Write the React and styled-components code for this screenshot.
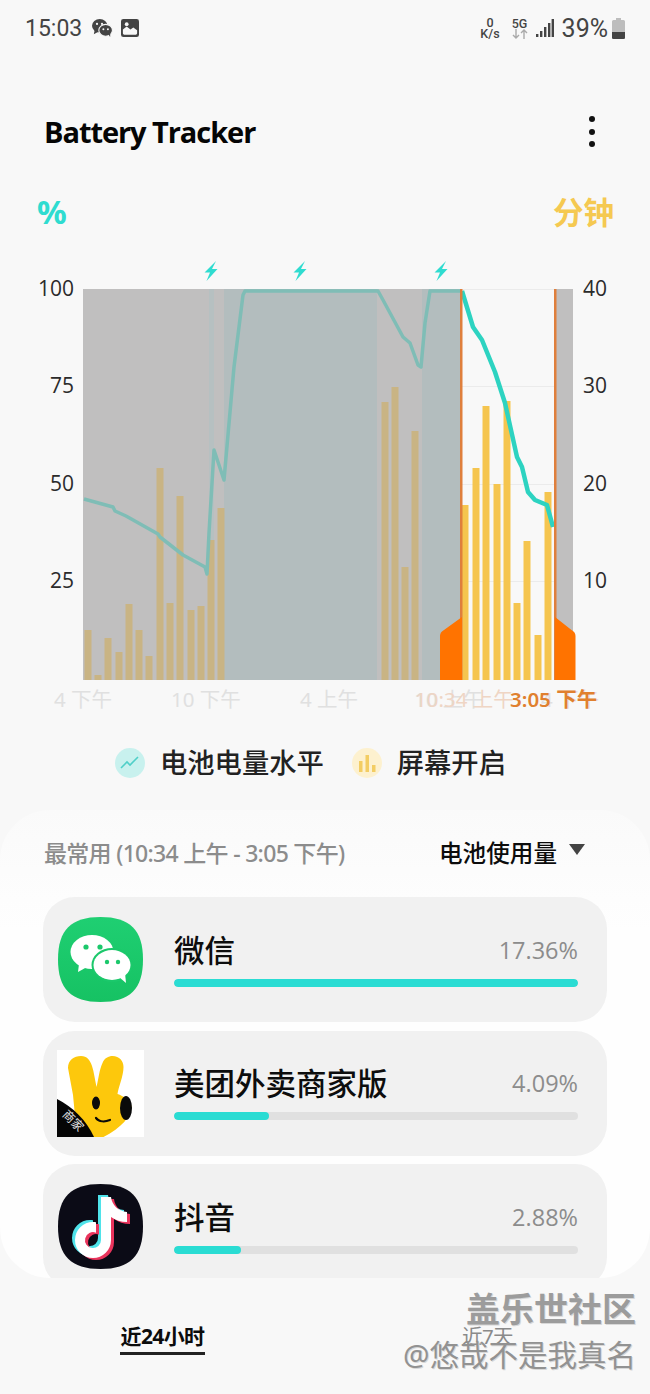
import React from "react";
import styled, { createGlobalStyle } from "styled-components";

const SANS = `"Noto Sans", "Noto Sans CJK SC", sans-serif`;

const GlobalStyle = createGlobalStyle`
  html, body {
    margin: 0;
    padding: 0;
    background: #f8f8f8;
  }
  body {
    font-family: ${SANS};
  }
`;

const dimBars = [
  [88, 630], [98, 675], [108, 638], [119, 652], [129, 604], [139, 630], [149, 656],
  [160, 468], [170, 603], [180, 496], [191, 610], [201, 606], [211, 540], [221, 508],
  [385, 402], [395, 387], [405, 567], [415, 431],
];
const liveBars = [
  [465, 505], [476, 468], [486, 406], [497, 484], [507, 401],
  [517, 603], [527, 541], [538, 635], [548, 492],
];
const dimLine =
  "84,499 113,507 115,511 126,516 158,534 160,537 183,555 205,567 207,574 209,533 214,450 224,480 234,367 243,295 245,291 378,291 383,300 403,337 410,343 418,365 421,367 425,323 430,291 462,291";
const liveLine =
  "462,291 473,327 482,340 495,372 505,403 517,457 522,467 528,492 535,500 547,505 553,527";
const bolts = [211, 300, 441];
const gridLines = [289, 386, 484, 581];

const xLabels = [
  { text: "4 下午", left: 54, tone: "faint" },
  { text: "10 下午", left: 171, tone: "faint" },
  { text: "4 上午", left: 300, tone: "faint" },
  { text: "10 上午", left: 414, tone: "faint" },
  { text: "4 下午", left: 541, tone: "faint" },
  { text: "10:34 上午", left: 415, tone: "soft" },
  { text: "3:05 下午", left: 510, tone: "strong" },
];

const toneColor = { faint: "#e0e0e0", soft: "#efd5c4", strong: "#e0802f" };

const Page = styled.div`
  position: relative;
  width: 650px;
  height: 1394px;
  overflow: hidden;
  background: #f8f8f8;
  display: flex;
  flex-direction: column;
`;

const StatusBar = styled.div`
  height: 56px;
  padding: 0 25px;
  box-sizing: border-box;
  display: flex;
  align-items: center;
  justify-content: space-between;
  color: #444;
`;

const StatusGroup = styled.div`
  display: flex;
  align-items: center;
  gap: 8px;
`;

const Clock = styled.span`
  font-family: Roboto, sans-serif;
  font-size: 23px;
  margin-right: 1px;
`;

const TinyStack = styled.div`
  display: flex;
  flex-direction: column;
  align-items: center;
  font-family: Roboto, sans-serif;
  font-size: 12.5px;
  font-weight: 500;
  line-height: 11px;
  margin-right: ${(p) => p.$after || 0}px;
`;

const Level = styled.span`
  font-family: Roboto, sans-serif;
  font-size: 25px;
  margin-right: -4px;
`;

const Header = styled.header`
  height: 120px;
  padding: 38px 44px 0;
  box-sizing: border-box;
  display: flex;
  align-items: flex-start;
  justify-content: space-between;
`;

const Title = styled.h1`
  margin: 0;
  font-family: "Open Sans", sans-serif;
  font-size: 29px;
  line-height: 76px;
  font-weight: 700;
  letter-spacing: -1.06px;
  color: #050505;
`;

const MoreDots = styled.div`
  display: flex;
  flex-direction: column;
  gap: 6.5px;
  margin: 22px 11px 0 0;
  i {
    width: 6px;
    height: 6px;
    border-radius: 50%;
    background: #111;
  }
`;

const Units = styled.div`
  height: 83px;
  padding: 16px 36px 0 37px;
  box-sizing: border-box;
  display: flex;
  justify-content: space-between;
  align-items: flex-start;
`;

const Unit = styled.span`
  font-size: ${(p) => p.$size}px;
  line-height: 40px;
  font-weight: 700;
  color: ${(p) => p.$color};
`;

const ChartGrid = styled.div`
  display: grid;
  grid-template-columns: 83px 492px 1fr;
  height: 424px;
`;

const AxisColumn = styled.div`
  padding-top: 15px;
  display: flex;
  flex-direction: column;
  gap: 69.4px;
  text-align: ${(p) => p.$align};
  padding-left: ${(p) => (p.$align === "left" ? 8 : 0)}px;
  padding-right: ${(p) => (p.$align === "right" ? 9 : 0)}px;
`;

const AxisLabel = styled.span`
  font-family: "Open Sans", sans-serif;
  font-size: 21px;
  line-height: 28px;
  height: 28px;
  color: #2b2b2b;
`;

const Plot = styled.svg`
  display: block;
  overflow: visible;
`;

const XAxis = styled.div`
  position: relative;
  height: 35px;
`;

const XLabel = styled.span`
  position: absolute;
  top: 1px;
  font-size: 20.5px;
  line-height: 30px;
  white-space: nowrap;
  font-weight: ${(p) => (p.$tone === "strong" ? 600 : 400)};
  color: ${(p) => toneColor[p.$tone]};
`;

const Legend = styled.div`
  height: 92px;
  padding: 26px 0 0 115px;
  box-sizing: border-box;
  display: flex;
  align-items: flex-start;
`;

const LegendItem = styled.div`
  display: flex;
  align-items: center;
  gap: 15px;
  margin-right: 28px;
`;

const LegendDot = styled.div`
  width: 30px;
  height: 30px;
  border-radius: 50%;
  background: ${(p) => p.$bg};
  display: flex;
  align-items: center;
  justify-content: center;
`;

const LegendText = styled.span`
  font-size: 27.3px;
  line-height: 38px;
  font-weight: 500;
  color: #222;
`;

const Sheet = styled.section`
  height: 468px;
  padding: 0 43px;
  box-sizing: border-box;
  border-radius: 50px;
  overflow: hidden;
  background: linear-gradient(#fafafa, #fefefe 120px);
`;

const SheetHead = styled.div`
  height: 87px;
  display: flex;
  align-items: center;
  justify-content: space-between;
  padding: 0 22px 4px 1px;
  box-sizing: border-box;
`;

const Range = styled.span`
  font-size: 23px;
  font-weight: 500;
  color: #8c8c8c;
  letter-spacing: -0.7px;
  white-space: nowrap;
`;

const Sort = styled.div`
  display: flex;
  align-items: center;
  gap: 12px;
  font-size: 23.6px;
  font-weight: 500;
  color: #0c0c0c;
  margin-left: -2px;
  i {
    width: 0;
    height: 0;
    border-left: 8px solid transparent;
    border-right: 8px solid transparent;
    border-top: 11px solid #444;
    margin-top: -4px;
  }
`;

const AppList = styled.div`
  display: flex;
  flex-direction: column;
  gap: 8.5px;
`;

const AppRow = styled.div`
  height: 125px;
  flex: none;
  border-radius: 32px;
  background: #f1f1f1;
  padding: 0 29px 0 14px;
  box-sizing: border-box;
  display: grid;
  grid-template-columns: 87px 1fr;
  column-gap: 30px;
  align-items: center;
  justify-items: center;
`;

const AppBody = styled.div`
  width: 100%;
  display: flex;
  flex-direction: column;
  gap: 8px;
  padding-bottom: 4px;
`;

const AppLine = styled.div`
  display: flex;
  align-items: center;
  justify-content: space-between;
`;

const AppName = styled.span`
  font-size: 30.5px;
  line-height: 42px;
  font-weight: 500;
  color: #0d0d0d;
`;

const AppShare = styled.span`
  font-family: "Open Sans", sans-serif;
  font-size: 23.5px;
  color: #8c8c8c;
`;

const Track = styled.div`
  height: 8px;
  border-radius: 4px;
  background: #e0e0e0;
  overflow: hidden;
`;

const Fill = styled.div`
  height: 100%;
  border-radius: 4px;
  background: #2adcd3;
`;

const Tabs = styled.nav`
  flex: 1;
  display: grid;
  grid-template-columns: 325px 325px;
`;

const Tab = styled.div`
  display: flex;
  justify-content: center;
  align-items: flex-start;
  padding-top: 43px;
`;

const TabLabel = styled.span`
  font-size: ${(p) => (p.$active ? 21 : 20.5)}px;
  line-height: 30px;
  font-weight: ${(p) => (p.$active ? 700 : 400)};
  color: ${(p) => (p.$active ? "#0c0c0c" : "#8a8a8a")};
  padding-bottom: 1px;
  border-bottom: ${(p) => (p.$active ? "3.5px solid #222" : "none")};
  letter-spacing: -0.6px;
`;

const Watermark = styled.div`
  position: absolute;
  right: 14px;
  top: 1288px;
  display: flex;
  flex-direction: column;
  align-items: flex-end;
  color: #929292;
  text-shadow: 1px 1px 0 #d8d8d8;
`;

const MarkTop = styled.span`
  font-size: 34px;
  line-height: 42px;
  font-weight: 700;
  color: #9c9c9c;
`;

const MarkBottom = styled.span`
  font-size: 29.5px;
  line-height: 42px;
  margin-top: 4px;
`;

const WeChatGlyph = () => (
  <svg width="22" height="20" viewBox="0 0 24 22">
    <ellipse cx="9.5" cy="8.5" rx="8.5" ry="7.5" fill="#444" />
    <path d="M4 13l-1 5 5-3z" fill="#444" />
    <ellipse cx="16" cy="13.5" rx="7.5" ry="6.5" fill="#444" stroke="#f8f8f8" strokeWidth="1.2" />
    <path d="M19 18l2 3 0-5z" fill="#444" />
    <circle cx="6.5" cy="6.5" r="1.2" fill="#f8f8f8" />
    <circle cx="12" cy="6.5" r="1.2" fill="#f8f8f8" />
    <circle cx="13.5" cy="12.5" r="1.1" fill="#f8f8f8" />
    <circle cx="18.5" cy="12.5" r="1.1" fill="#f8f8f8" />
  </svg>
);

const GalleryGlyph = () => (
  <svg width="18" height="18" viewBox="0 0 19 19">
    <rect width="19" height="19" rx="2.5" fill="#444" />
    <path d="M2 15V11l4-3 4 3 3-2 4 3v3a1.5 1.5 0 0 1-1.5 1.5h-12A1.5 1.5 0 0 1 2 15z" fill="#f8f8f8" />
    <circle cx="6" cy="5.5" r="2" fill="#f8f8f8" />
  </svg>
);

const DataArrows = () => (
  <svg width="16" height="10" viewBox="0 0 16 10" fill="none" stroke="#aaa" strokeWidth="1.4">
    <path d="M4 0v9M1 6l3 3 3-3" />
    <path d="M12 10V1M9 4l3-3 3 3" />
  </svg>
);

const SignalGlyph = () => (
  <svg width="18" height="18" viewBox="0 0 18 18" fill="#444">
    <rect x="0" y="15" width="2.4" height="3" />
    <rect x="4" y="12" width="2.4" height="6" />
    <rect x="8" y="8" width="2.4" height="10" />
    <rect x="12" y="4" width="2.4" height="14" />
    <rect x="15.6" y="0" width="2.4" height="18" />
  </svg>
);

const BatteryGlyph = () => (
  <svg width="13" height="21" viewBox="0 0 13 21">
    <path d="M4 0h5v2h2.5A1.5 1.5 0 0 1 13 3.5V19.5A1.5 1.5 0 0 1 11.5 21h-10A1.5 1.5 0 0 1 0 19.5V3.5A1.5 1.5 0 0 1 1.5 2H4z" fill="#bdbdbd" />
    <path d="M0 14h13v5.5A1.5 1.5 0 0 1 11.5 21h-10A1.5 1.5 0 0 1 0 19.5z" fill="#444" />
  </svg>
);

const TrendGlyph = () => (
  <svg width="20" height="14" viewBox="0 0 20 14" fill="none" stroke="#4fcfc8" strokeWidth="1.6">
    <path d="M1 12l6-6 3 3 8-8" />
  </svg>
);

const BarsGlyph = () => (
  <svg width="18" height="18" viewBox="0 0 18 18" fill="#f3cd63">
    <rect x="1" y="7" width="3.5" height="11" />
    <rect x="7.5" y="1" width="3.5" height="17" />
    <rect x="14" y="11" width="3.5" height="7" />
  </svg>
);

const SQUIRCLE = "M42.5 0C72 0 85 13 85 42.5S72 85 42.5 85 0 72 0 42.5 13 0 42.5 0z";

const WeChatIcon = () => (
  <svg width="85" height="85" viewBox="0 0 85 85">
    <defs>
      <linearGradient id="wx" x1="0" y1="0" x2="0" y2="1">
        <stop offset="0" stopColor="#1fcf72" />
        <stop offset="1" stopColor="#16c263" />
      </linearGradient>
    </defs>
    <path d={SQUIRCLE} fill="url(#wx)" />
    <ellipse cx="34" cy="35" rx="21.5" ry="17" fill="#fff" />
    <path d="M21 47l-1 8 9-5z" fill="#fff" />
    <ellipse cx="54" cy="48" rx="20.5" ry="17" fill="#1bc86b" />
    <ellipse cx="54" cy="48" rx="18.5" ry="15" fill="#fff" />
    <path d="M61 60l7 6-1-10z" fill="#fff" />
    <circle cx="28" cy="30" r="2.6" fill="#1bc86b" />
    <circle cx="42" cy="30" r="2.6" fill="#1bc86b" />
    <circle cx="49" cy="45" r="2.2" fill="#1bc86b" />
    <circle cx="60" cy="45" r="2.2" fill="#1bc86b" />
  </svg>
);

const MeituanIcon = () => (
  <svg width="87" height="87" viewBox="0 0 87 87">
    <rect width="87" height="87" fill="#fff" />
    <path
      d="M11 18C11 10 17 6 24 6c6 0 9 4 11 10 2 6 3 14 4.5 21 2-8 3-18 6-24 2-5 6-7 10-7 7 0 11 5 11 11 0 9-5 20-6 27 6 2 12 6 14 12 0 10-10 22-28 31H20L16 45z"
      fill="#fdc80c"
    />
    <ellipse cx="69" cy="58" rx="6" ry="12" fill="#0a0a0a" />
    <ellipse cx="39" cy="53" rx="4" ry="6.5" fill="#0a0a0a" />
    <path d="M39 68c3 4 9 4 14 2" fill="none" stroke="#0a0a0a" strokeWidth="2.2" strokeLinecap="round" />
    <path d="M0 49c16 8 29 21 37 38H0z" fill="#050505" />
    <text
      x="16"
      y="75"
      fontSize="12"
      fill="#e8e8e8"
      fontFamily="'Noto Sans CJK SC', sans-serif"
      textAnchor="middle"
      transform="rotate(45 16 71)"
    >
      商家
    </text>
  </svg>
);

const NOTE =
  "M43 13h10c1 8 7 14 16 15v10c-6 0-12-2-16-5v23a18 18 0 1 1-18-18c1 0 2 0 3 .2v10.5a8 8 0 1 0 5 7.3z";

const TikTokIcon = () => (
  <svg width="85" height="85" viewBox="0 0 85 85">
    <path d={SQUIRCLE} fill="#0b0b16" />
    <path d={NOTE} fill="#4fe3ea" transform="translate(-3 -2)" />
    <path d={NOTE} fill="#e9345c" transform="translate(3 2)" />
    <path d={NOTE} fill="#fff" />
  </svg>
);

const apps = [
  { name: "微信", share: "17.36%", pct: 100, Icon: WeChatIcon },
  { name: "美团外卖商家版", share: "4.09%", pct: 23.5, Icon: MeituanIcon },
  { name: "抖音", share: "2.88%", pct: 16.5, Icon: TikTokIcon },
];

const ChartPlot = () => (
  <Plot width="492" height="424" viewBox="83 259 492 424">
    <rect x="83" y="289" width="378" height="391" fill="#c0bfbf" />
    <rect x="555" y="289" width="18" height="391" fill="#c0bfbf" />
    <rect x="209" y="289" width="5" height="391" fill="#b6c0c1" />
    <rect x="224" y="289" width="153" height="391" fill="#b3bdbe" />
    <rect x="422" y="289" width="39" height="391" fill="#b3bdbe" />
    {gridLines.map((y) => (
      <rect key={y} x="461" y={y} width="94" height="1" fill="#ebebeb" />
    ))}
    {dimBars.map(([x, top]) => (
      <rect key={x} x={x - 3.5} y={top} width="7" height={680 - top} fill="#c9b484" />
    ))}
    {liveBars.map(([x, top]) => (
      <rect key={x} x={x - 3.5} y={top} width="7" height={680 - top} fill="#f5c54f" />
    ))}
    <polyline points={dimLine} fill="none" stroke="#7fbdb6" strokeWidth="3.5" strokeLinejoin="round" />
    <polyline points={liveLine} fill="none" stroke="#2dd3c1" strokeWidth="4.5" strokeLinejoin="round" />
    <rect x="460" y="289" width="2.5" height="391" fill="#df7f3c" />
    <rect x="554" y="289" width="2.5" height="391" fill="#df7f3c" />
    <path d="M462 617v63h-22v-44q0-4 4-6z" fill="#ff7300" />
    <path d="M555 617v63h20.5v-44q0-4-4-6z" fill="#ff7300" />
    {bolts.map((x) => (
      <path
        key={x}
        d="M5 -10L-6.5 1.5H-1L-4.5 10 6.5-2H1z"
        fill="#2fdcd0"
        transform={`translate(${x} 271)`}
      />
    ))}
  </Plot>
);

export default function App() {
  return (
    <Page>
      <GlobalStyle />
      <StatusBar>
        <StatusGroup>
          <Clock>15:03</Clock>
          <WeChatGlyph />
          <GalleryGlyph />
        </StatusGroup>
        <StatusGroup>
          <TinyStack $after={4}>
            <span>0</span>
            <span>K/s</span>
          </TinyStack>
          <TinyStack>
            <span>5G</span>
            <DataArrows />
          </TinyStack>
          <SignalGlyph />
          <Level>39%</Level>
          <BatteryGlyph />
        </StatusGroup>
      </StatusBar>
      <Header>
        <Title>Battery Tracker</Title>
        <MoreDots>
          <i />
          <i />
          <i />
        </MoreDots>
      </Header>
      <Units>
        <Unit $color="#2fdcd0" $size={33}>%</Unit>
        <Unit $color="#f5c951" $size={30.5}>分钟</Unit>
      </Units>
      <ChartGrid>
        <AxisColumn $align="right">
          {[100, 75, 50, 25].map((v) => (
            <AxisLabel key={v}>{v}</AxisLabel>
          ))}
        </AxisColumn>
        <ChartPlot />
        <AxisColumn $align="left">
          {[40, 30, 20, 10].map((v) => (
            <AxisLabel key={v}>{v}</AxisLabel>
          ))}
        </AxisColumn>
      </ChartGrid>
      <XAxis>
        {xLabels.map((l) => (
          <XLabel key={l.text + l.left} $tone={l.tone} style={{ left: l.left }}>
            {l.text}
          </XLabel>
        ))}
      </XAxis>
      <Legend>
        <LegendItem>
          <LegendDot $bg="#c8f1ee">
            <TrendGlyph />
          </LegendDot>
          <LegendText>电池电量水平</LegendText>
        </LegendItem>
        <LegendItem>
          <LegendDot $bg="#fdf1cf">
            <BarsGlyph />
          </LegendDot>
          <LegendText>屏幕开启</LegendText>
        </LegendItem>
      </Legend>
      <Sheet>
        <SheetHead>
          <Range>最常用 (10:34 上午 - 3:05 下午)</Range>
          <Sort>
            电池使用量
            <i />
          </Sort>
        </SheetHead>
        <AppList>
          {apps.map(({ name, share, pct, Icon }) => (
            <AppRow key={name}>
              <Icon />
              <AppBody>
                <AppLine>
                  <AppName>{name}</AppName>
                  <AppShare>{share}</AppShare>
                </AppLine>
                <Track>
                  <Fill style={{ width: `${pct}%` }} />
                </Track>
              </AppBody>
            </AppRow>
          ))}
        </AppList>
      </Sheet>
      <Tabs>
        <Tab>
          <TabLabel $active>近24小时</TabLabel>
        </Tab>
        <Tab>
          <TabLabel>近7天</TabLabel>
        </Tab>
      </Tabs>
      <Watermark>
        <MarkTop>盖乐世社区</MarkTop>
        <MarkBottom>@悠哉不是我真名</MarkBottom>
      </Watermark>
    </Page>
  );
}
